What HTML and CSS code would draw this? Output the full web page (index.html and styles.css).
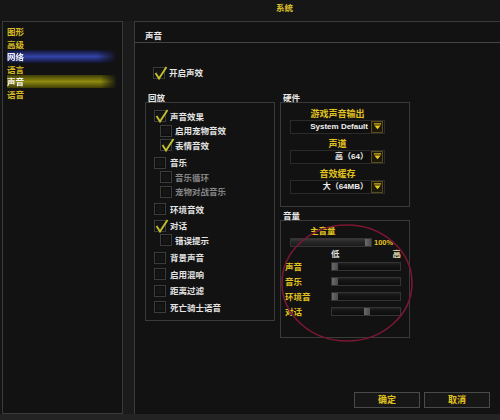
FILE: index.html
```html
<!DOCTYPE html>
<html lang="zh">
<head>
<meta charset="utf-8">
<title>系统</title>
<link rel="stylesheet" href="styles.css">
</head>
<body>
<div class="window">
  <div class="titlebar">系统</div>
  <div class="main">
    <nav class="sidebar">
      <div class="nav-item">图形</div>
      <div class="nav-item">高级</div>
      <div class="nav-item sel-blue">网络</div>
      <div class="nav-item">语言</div>
      <div class="nav-item sel-yellow">声音</div>
      <div class="nav-item">语音</div>
    </nav>
    <div class="divider"></div>
    <section class="content">
      <header class="content-head">声音</header>
      <div class="content-body">
        <div class="check-row enable"><span class="cb"><svg class="tick" viewBox="0 0 16 16"><polyline points="2.5,8 6,13.5 13.5,2"/></svg></span><span>开启声效</span></div>
        <div class="columns">
          <div class="group playback">
            <div class="group-title">回放</div>
            <div class="group-box">
              <div class="check-row main-row"><span class="cb"><svg class="tick" viewBox="0 0 16 16"><polyline points="2.5,8 6,13.5 13.5,2"/></svg></span><span>声音效果</span></div>
              <div class="check-row sub-row"><span class="cb"></span><span>启用宠物音效</span></div>
              <div class="check-row sub-row"><span class="cb"><svg class="tick" viewBox="0 0 16 16"><polyline points="2.5,8 6,13.5 13.5,2"/></svg></span><span>表情音效</span></div>
              <div class="check-row main-row"><span class="cb"></span><span>音乐</span></div>
              <div class="check-row sub-row disabled"><span class="cb"></span><span>音乐循环</span></div>
              <div class="check-row sub-row disabled"><span class="cb"></span><span>宠物对战音乐</span></div>
              <div class="check-row main-row"><span class="cb"></span><span>环境音效</span></div>
              <div class="check-row main-row"><span class="cb"><svg class="tick" viewBox="0 0 16 16"><polyline points="2.5,8 6,13.5 13.5,2"/></svg></span><span>对话</span></div>
              <div class="check-row sub-row"><span class="cb"></span><span>错误提示</span></div>
              <div class="check-row main-row"><span class="cb"></span><span>背景声音</span></div>
              <div class="check-row main-row"><span class="cb"></span><span>启用混响</span></div>
              <div class="check-row main-row"><span class="cb"></span><span>距离过滤</span></div>
              <div class="check-row main-row"><span class="cb"></span><span>死亡骑士语音</span></div>
            </div>
          </div>
          <div class="col-right">
            <div class="group hardware">
              <div class="group-title">硬件</div>
              <div class="group-box">
                <div class="field">
                  <div class="field-label">游戏声音输出</div>
                  <div class="dropdown"><span class="dd-text latin">System Default</span><span class="dd-btn"><svg viewBox="0 0 10 10"><rect x="1" y="1.5" width="8" height="1.2"/><polygon points="1.5,4 8.5,4 5,8"/></svg></span></div>
                  <div class="field-label">声道</div>
                  <div class="dropdown"><span class="dd-text">高（<span class="latin">64</span>）</span><span class="dd-btn"><svg viewBox="0 0 10 10"><rect x="1" y="1.5" width="8" height="1.2"/><polygon points="1.5,4 8.5,4 5,8"/></svg></span></div>
                  <div class="field-label">音效缓存</div>
                  <div class="dropdown"><span class="dd-text">大（<span class="latin">64MB</span>）</span><span class="dd-btn"><svg viewBox="0 0 10 10"><rect x="1" y="1.5" width="8" height="1.2"/><polygon points="1.5,4 8.5,4 5,8"/></svg></span></div>
                </div>
              </div>
            </div>
            <div class="group volume">
              <div class="group-title">音量</div>
              <div class="group-box">
                <div class="master-label">主音量</div>
                <div class="master-row">
                  <div class="slider master" style="--v:1"><span class="thumb"></span></div>
                  <span class="pct latin">100%</span>
                </div>
                <div class="scale"><span class="low">低</span><span class="high">高</span></div>
                <div class="vol-row"><span class="vol-label">声音</span><div class="slider" style="--v:0"><span class="thumb"></span></div></div>
                <div class="vol-row"><span class="vol-label">音乐</span><div class="slider" style="--v:0"><span class="thumb"></span></div></div>
                <div class="vol-row"><span class="vol-label">环境音</span><div class="slider" style="--v:0"><span class="thumb"></span></div></div>
                <div class="vol-row"><span class="vol-label">对话</span><div class="slider" style="--v:0.52"><span class="thumb"></span></div></div>
              </div>
            </div>
          </div>
        </div>
        <div class="buttons">
          <button class="btn">确定</button>
          <button class="btn">取消</button>
        </div>
      </div>
    </section>
  </div>
  <div class="bottom-strip"></div>
</div>
<svg class="annotation" viewBox="0 0 500 420" width="500" height="420"><ellipse cx="347" cy="283" rx="65" ry="58"/></svg>
</body>
</html>
```

FILE: styles.css
```css
* {
  box-sizing: border-box;
  margin: 0;
  padding: 0;
}

html, body {
  width: 500px;
  height: 420px;
  overflow: hidden;
}

body {
  position: relative;
  background: #141414;
  color: #e4e4e4;
  font-family: "Noto Sans CJK SC", "Noto Sans", sans-serif;
  font-weight: 700;
  font-size: 8.5px;
}

.latin {
  font-family: "Liberation Sans", "Noto Sans", sans-serif;
  font-weight: 700;
}

.window {
  display: flex;
  flex-direction: column;
  height: 420px;
}

.titlebar {
  height: 21px;
  padding: 2px 0 0 276px;
  line-height: 10px;
  color: #d9bf2a;
  background: #161616;
}

.main {
  flex: 1;
  display: flex;
  min-height: 0;
}

.sidebar {
  display: flex;
  flex-direction: column;
  width: 121px;
  margin-left: 2px;
  padding: 3px 0 0 4px;
  border: 1px solid #3a3a3a;
  background: #121212;
}

.nav-item {
  width: 110px;
  height: 12.6px;
  line-height: 12.6px;
  color: #d8ba22;
}

.nav-item.sel-blue {
  color: #f0f0f0;
  background: linear-gradient(to bottom, #10142e, #3342a8 50%, #10142e);
  -webkit-mask-image: linear-gradient(to right, #000 82%, transparent);
  mask-image: linear-gradient(to right, #000 82%, transparent);
}

.nav-item.sel-yellow {
  color: #f4f4f4;
  background: linear-gradient(to bottom, #3e3c06, #8f8b10 50%, #3e3c06);
  -webkit-mask-image: linear-gradient(to right, #000 85%, transparent);
  mask-image: linear-gradient(to right, #000 85%, transparent);
}

.divider {
  width: 11px;
  background: #1b1b1b;
}

.content {
  flex: 1;
  display: flex;
  flex-direction: column;
  border-left: 1px solid #3a3a3a;
  border-top: 1px solid #3a3a3a;
  background: #121212;
}

.content-head {
  height: 21px;
  padding: 8px 0 0 10px;
  line-height: 10px;
  color: #ececec;
  border-bottom: 1px solid #444;
}

.content-body {
  flex: 1;
  display: flex;
  flex-direction: column;
  padding: 0 10px 6px 10px;
}

.check-row {
  display: flex;
  align-items: center;
  gap: 4px;
  height: 13.5px;
  line-height: 13.5px;
}

.enable {
  margin-top: 23px;
  padding-left: 8px;
}

.cb {
  position: relative;
  flex: none;
  width: 12px;
  height: 12px;
  border: 1px solid #3c3c3c;
  background: #151515;
  box-shadow: inset 0 0 2px #000;
}

.tick {
  position: absolute;
  left: -1px;
  top: -3px;
  width: 16px;
  height: 16px;
  overflow: visible;
}

.tick polyline {
  fill: none;
  stroke: #c2bf2c;
  stroke-width: 1.9;
  stroke-linejoin: miter;
}

.columns {
  display: flex;
  gap: 5px;
  margin-top: 13px;
}

.group-title {
  height: 9px;
  line-height: 9px;
  padding-left: 3px;
  color: #e6e6e6;
}

.group-box {
  border: 1px solid #3a3a3a;
}

.playback {
  width: 130px;
}

.playback .group-box {
  height: 219px;
  padding: 7px 0 0 8px;
}

.main-row + .main-row {
  margin-top: 3px;
}

.sub-row + .main-row {
  margin-top: 4px;
}

.sub-row {
  margin-top: 1px;
  padding-left: 6px;
  gap: 3px;
}

.disabled {
  color: #858585;
}

.col-right {
  display: flex;
  flex-direction: column;
  width: 130px;
}

.hardware .group-box {
  height: 105px;
  padding: 4px 0 0 9px;
}

.field {
  display: flex;
  flex-direction: column;
  width: 95px;
}

.field-label {
  height: 13px;
  line-height: 13px;
  text-align: center;
  color: #e2c31e;
  font-size: 9px;
}

.dropdown + .field-label {
  margin-top: 3px;
}

.dropdown {
  display: flex;
  align-items: center;
  justify-content: flex-end;
  height: 14px;
  padding-right: 1px;
  border: 1px solid #2a2a2a;
  background: #0f0f0f;
  color: #f0f0f0;
}

.dd-text {
  font-size: 8px;
  line-height: 12px;
}

.dd-btn {
  display: flex;
  align-items: center;
  justify-content: center;
  width: 12px;
  height: 12px;
  margin-left: 3px;
  border: 1px solid #5a4c1a;
  background: #1d1a0c;
}

.dd-btn svg {
  width: 9px;
  height: 9px;
  fill: #eccb1e;
}

.volume .group-title {
  margin-top: 3px;
  height: 10px;
  line-height: 10px;
}

.volume .group-box {
  height: 118px;
  padding: 3px 0 0 4px;
}

.master-label {
  height: 12px;
  line-height: 12px;
  padding-left: 25px;
  color: #e2c31e;
}

.master-row {
  display: flex;
  align-items: center;
  gap: 2px;
  height: 9px;
  margin: 2px 0 0 5px;
}

.pct {
  font-size: 7.5px;
  color: #e2c31e;
}

.scale {
  display: flex;
  justify-content: space-between;
  width: 70px;
  height: 11px;
  margin: 1px 0 0 46px;
  line-height: 11px;
}

.scale .low {
  color: #dedede;
}

.scale .high {
  color: #e8ddb0;
}

.vol-row {
  display: flex;
  align-items: center;
  height: 15px;
}

.vol-label {
  width: 46px;
  color: #e2c31e;
}

.slider {
  position: relative;
  width: 70px;
  height: 9px;
  border: 1px solid #343434;
  background: linear-gradient(to bottom, #222 0, #141414 40%, #0e0e0e 100%);
}

.slider.master {
  width: 82px;
  background: linear-gradient(to bottom, #3a3a3a 0, #262626 40%, #1c1c1c 100%);
}

.thumb {
  position: absolute;
  top: 0;
  bottom: 0;
  left: calc(var(--v) * (100% - 6px));
  width: 6px;
  background: linear-gradient(to right, #6a6a6a, #4c4c4c);
}

.buttons {
  display: flex;
  justify-content: flex-end;
  gap: 4px;
  margin-top: auto;
}

.btn {
  width: 66px;
  height: 16px;
  border: 1px solid #4a4a4a;
  background: #171717;
  color: #e2c31e;
  font: inherit;
  font-size: 9px;
  line-height: 14px;
  text-align: center;
}

.bottom-strip {
  height: 6px;
  background: #232323;
}

.annotation {
  position: absolute;
  left: 0;
  top: 0;
  pointer-events: none;
}

.annotation ellipse {
  fill: none;
  stroke: #7c1632;
  stroke-width: 1.6;
}
```
